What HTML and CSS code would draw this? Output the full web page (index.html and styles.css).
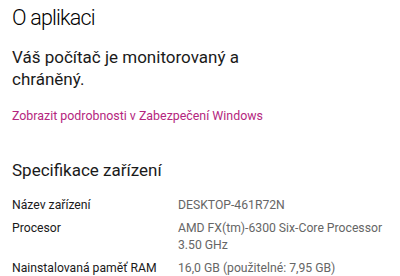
FILE: index.html
```html
<!DOCTYPE html>
<html lang="cs">
<head>
<meta charset="utf-8">
<link rel="stylesheet" href="styles.css">
</head>
<body>
<main class="page">
  <h1 class="title">O aplikaci</h1>
  <p class="status">Váš počítač je monitorovaný a<br>chráněný.</p>
  <a class="link" href="#">Zobrazit podrobnosti v Zabezpečení Windows</a>
  <h2 class="section">Specifikace zařízení</h2>
  <dl class="specs">
    <div class="row"><dt>Název zařízení</dt><dd>DESKTOP-461R72N</dd></div>
    <div class="row"><dt>Procesor</dt><dd>AMD FX(tm)-6300 Six-Core Processor<br>3.50 GHz</dd></div>
    <div class="row"><dt>Nainstalovaná paměť RAM</dt><dd>16,0 GB (použitelné: 7,95 GB)</dd></div>
  </dl>
</main>
</body>
</html>
```
FILE: styles.css
```css
html, body {
  margin: 0;
  padding: 0;
  background: #ffffff;
}
body {
  font-family: Roboto, "Open Sans", "Liberation Sans", sans-serif;
  color: #1a1a1a;
}
.page {
  padding: 1px 12px 0;
  display: flex;
  flex-direction: column;
  align-items: flex-start;
}
.title {
  margin: 0;
  font-size: 21.5px;
  font-weight: 300;
  letter-spacing: -0.8px;
  line-height: 34px;
  color: #000;
}
.status {
  margin: 11px 0 0;
  font-size: 17px;
  line-height: 22px;
  color: #1a1a1a;
}
.link {
  margin-top: 17px;
  font-size: 12.4px;
  line-height: 18px;
  color: #b4267e;
  text-decoration: none;
}
.section {
  margin: 33px 0 0;
  font-size: 17px;
  font-weight: 400;
  line-height: 24px;
  color: #1a1a1a;
}
.specs {
  margin: 15px 0 0;
  display: flex;
  flex-direction: column;
  gap: 6px;
  font-size: 12.2px;
  line-height: 17px;
}
.row {
  display: grid;
  grid-template-columns: 166px auto;
}
.row dt {
  color: #1a1a1a;
  white-space: nowrap;
}
.row dd {
  margin: 0;
  color: #666666;
  white-space: nowrap;
}
```
